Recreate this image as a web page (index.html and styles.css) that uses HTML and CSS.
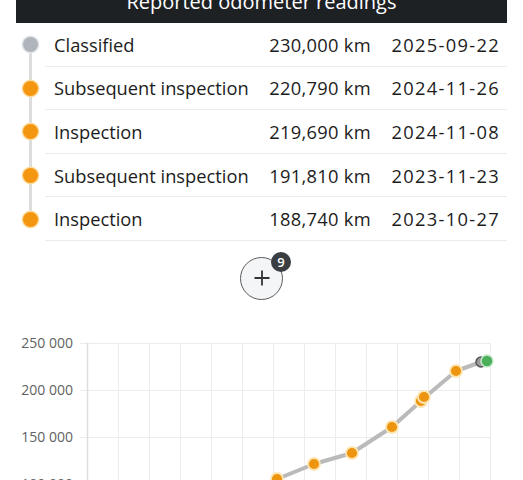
FILE: index.html
```html
<!DOCTYPE html>
<html lang="en">
<head>
<meta charset="utf-8">
<title>Reported odometer readings</title>
<link rel="stylesheet" href="styles.css">
</head>
<body>
<div class="page">
  <div class="header">Reported odometer readings</div>
  <ul class="timeline">
    <li class="row">
      <span class="dot-col"><span class="dot dot-gray"></span></span>
      <div class="cells"><span class="label">Classified</span><span class="km">230,000 km</span><span class="date">2025-09-22</span></div>
    </li>
    <li class="row">
      <span class="dot-col"><span class="dot"></span></span>
      <div class="cells"><span class="label">Subsequent inspection</span><span class="km">220,790 km</span><span class="date">2024-11-26</span></div>
    </li>
    <li class="row">
      <span class="dot-col"><span class="dot"></span></span>
      <div class="cells"><span class="label">Inspection</span><span class="km">219,690 km</span><span class="date">2024-11-08</span></div>
    </li>
    <li class="row">
      <span class="dot-col"><span class="dot"></span></span>
      <div class="cells"><span class="label">Subsequent inspection</span><span class="km">191,810 km</span><span class="date">2023-11-23</span></div>
    </li>
    <li class="row">
      <span class="dot-col"><span class="dot"></span></span>
      <div class="cells"><span class="label">Inspection</span><span class="km">188,740 km</span><span class="date">2023-10-27</span></div>
    </li>
  </ul>
  <div class="more">
    <button class="plus" type="button" aria-label="Show more">
      <svg width="18" height="18" viewBox="0 0 18 18"><path d="M9 1.5V16.5M1.5 9H16.5" stroke="#333" stroke-width="1.8" fill="none"/></svg>
      <span class="badge">9</span>
    </button>
  </div>
  <svg class="chart" width="523" height="160" viewBox="0 0 523 160">
    <g stroke="#ececec" stroke-width="1">
      <line x1="80" y1="23.5" x2="490" y2="23.5"/>
      <line x1="80" y1="70.5" x2="490" y2="70.5"/>
      <line x1="80" y1="117.5" x2="490" y2="117.5"/>
      <line x1="80" y1="164.5" x2="490" y2="164.5"/>
      <line x1="118.5" y1="23" x2="118.5" y2="160"/>
      <line x1="149.5" y1="23" x2="149.5" y2="160"/>
      <line x1="180.5" y1="23" x2="180.5" y2="160"/>
      <line x1="211.5" y1="23" x2="211.5" y2="160"/>
      <line x1="242.5" y1="23" x2="242.5" y2="160"/>
      <line x1="273.5" y1="23" x2="273.5" y2="160"/>
      <line x1="304.5" y1="23" x2="304.5" y2="160"/>
      <line x1="335.5" y1="23" x2="335.5" y2="160"/>
      <line x1="366.5" y1="23" x2="366.5" y2="160"/>
      <line x1="397.5" y1="23" x2="397.5" y2="160"/>
      <line x1="428.5" y1="23" x2="428.5" y2="160"/>
      <line x1="459.5" y1="23" x2="459.5" y2="160"/>
      <line x1="490.5" y1="23" x2="490.5" y2="160"/>
    </g>
    <line x1="87.5" y1="23" x2="87.5" y2="160" stroke="#dedede" stroke-width="1.5"/>
    <g class="axis-label" text-anchor="end">
      <text x="73" y="28">250 000</text>
      <text x="73" y="75">200 000</text>
      <text x="73" y="122">150 000</text>
      <text x="73" y="169">100 000</text>
    </g>
    <polyline points="240,174 277,159 314,144 352,133 392,107 421,81 424,78 456,51 481,42 487,41" fill="none" stroke="#bababa" stroke-width="4" stroke-linejoin="round" stroke-linecap="round"/>
    <g fill="#ee950f" stroke="#fde6b4" stroke-width="1.8">
      <circle cx="277" cy="159" r="6"/>
      <circle cx="314" cy="144" r="6"/>
      <circle cx="352" cy="133" r="6"/>
      <circle cx="392" cy="107" r="6"/>
      <circle cx="421" cy="81" r="6"/>
      <circle cx="424" cy="77" r="6"/>
      <circle cx="456" cy="51" r="6"/>
    </g>
    <circle cx="481" cy="42" r="5" fill="#9a9a9a" stroke="#555" stroke-width="1.5"/>
    <circle cx="487" cy="41" r="6" fill="#4cb05a" stroke="#c9ead0" stroke-width="1.5"/>
  </svg>
</div>
</body>
</html>
```

FILE: styles.css
```css
html, body {
  margin: 0;
  padding: 0;
  background: #ffffff;
}

body {
  font-family: "Open Sans", "Noto Sans", sans-serif;
  color: #1c1c1c;
  overflow: hidden;
}

.page {
  padding: 0 16px;
}

.header {
  margin-top: -18px;
  height: 41px;
  line-height: 40px;
  background: #1e2124;
  color: #ffffff;
  text-align: center;
  font-size: 20px;
}

.timeline {
  list-style: none;
  margin: 0;
  padding: 0;
  position: relative;
}

.timeline::before {
  content: "";
  position: absolute;
  left: 13px;
  width: 3px;
  top: 22px;
  bottom: 22px;
  background: #dddddd;
}

.row {
  display: flex;
  height: 43.6px;
  box-sizing: border-box;
}

.dot-col {
  width: 29px;
  flex: none;
  display: flex;
  align-items: center;
  justify-content: center;
}

.dot {
  position: relative;
  z-index: 1;
  width: 15px;
  height: 15px;
  border-radius: 50%;
  background: #f4960f;
  box-shadow: 0 0 0 1.5px #fcdca0;
}

.dot-gray {
  background: #afb5bb;
  box-shadow: 0 0 0 1.5px #e2e5e8;
}

.cells {
  flex: 1;
  display: grid;
  grid-template-columns: 1fr auto 128px;
  align-items: center;
  border-bottom: 1px solid #ebebeb;
  padding: 0 8px 0 9px;
  font-size: 18.3px;
}

.km {
  text-align: right;
  letter-spacing: 0.3px;
}

.date {
  text-align: right;
  letter-spacing: 1.3px;
  margin-right: -1px;
}

.more {
  display: flex;
  justify-content: center;
  padding-top: 16px;
}

.plus {
  position: relative;
  width: 43px;
  height: 43px;
  padding: 0;
  border: 1.5px solid #5b5b5b;
  border-radius: 50%;
  background: #f3f5f6;
  display: flex;
  align-items: center;
  justify-content: center;
}

.badge {
  position: absolute;
  left: 30px;
  top: -6px;
  width: 20px;
  height: 20px;
  border-radius: 50%;
  background: #3a3d41;
  color: #ffffff;
  font-family: "Open Sans", sans-serif;
  font-size: 13px;
  font-weight: 600;
  line-height: 20px;
  text-align: center;
}

.chart {
  display: block;
  margin: 20px -16px 0;
}

.axis-label {
  font-family: "Open Sans", sans-serif;
  font-size: 14px;
  fill: #626262;
}
```
